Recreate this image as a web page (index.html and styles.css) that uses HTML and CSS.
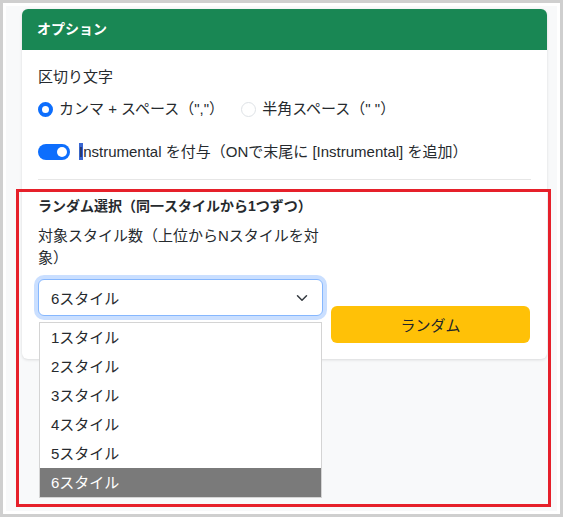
FILE: index.html
```html
<!DOCTYPE html>
<html lang="ja">
<head>
    <meta charset="UTF-8">
    <meta name="viewport" content="width=device-width, initial-scale=1.0">
    <title>オプション</title>
    <link rel="stylesheet" href="styles.css">
</head>
<body>
    <div class="frame">
        <div class="page">
            <div class="card">
                <div class="card-header">オプション</div>
                <div class="card-body">
                    <div class="field-label">区切り文字</div>
                    <div class="radio-row">
                        <label class="radio-item">
                            <span class="radio checked"></span> カンマ + スペース（","）
                        </label>
                        <label class="radio-item">
                            <span class="radio"></span> 半角スペース（" "）
                        </label>
                    </div>
                    <div class="switch-row">
                        <span class="switch"></span>
                        <span><span class="sel">I</span>nstrumental を付与（ONで末尾に [Instrumental] を追加）</span>
                    </div>
                    <hr class="divider">
                    <div class="section-title">ランダム選択（同一スタイルから1つずつ）</div>
                    <div class="random-row">
                        <div class="select-col">
                            <div class="field-label">対象スタイル数（上位からNスタイルを対象）</div>
                            <div class="select">
                                <span>6スタイル</span>
                                <svg width="12" height="12" viewBox="0 0 16 16"><path d="M2 5l6 6 6-6" fill="none" stroke="#343a40" stroke-width="2" stroke-linecap="round" stroke-linejoin="round"/></svg>
                            </div>
                            <ul class="dropdown">
                                <li>1スタイル</li>
                                <li>2スタイル</li>
                                <li>3スタイル</li>
                                <li>4スタイル</li>
                                <li>5スタイル</li>
                                <li class="active">6スタイル</li>
                            </ul>
                        </div>
                        <div class="button-col">
                            <button class="btn-random">ランダム</button>
                        </div>
                    </div>
                </div>
            </div>
        </div>
        <div class="highlight"></div>
    </div>
</body>
</html>
```

FILE: styles.css
```css
* {
    box-sizing: border-box;
}
html, body {
    margin: 0;
    height: 100%;
}
body {
    font-family: "Liberation Sans", "Noto Sans CJK JP", sans-serif;
    font-size: 15px;
    color: #262a2e;
    background-color: #fff;
}
.frame {
    position: relative;
    height: 517px;
    border: 3px solid #cfcfcf;
    padding: 3px;
    background-color: #fff;
}
.page {
    height: 100%;
    background-color: #f8f9fa;
    padding: 3px 10px 0 16px;
}
.card {
    background-color: #fff;
    border-radius: 6px;
    box-shadow: 0 1px 3px rgba(0,0,0,0.12);
}
.card-header {
    background-color: #198754;
    color: #fff;
    font-weight: 700;
    font-size: 14px;
    height: 41px;
    line-height: 41px;
    padding: 0 15px;
    border-radius: 6px 6px 0 0;
}
.card-body {
    padding: 16px;
}
.field-label {
    line-height: 22px;
}
.radio-row {
    display: flex;
    gap: 17px;
    margin-top: 10px;
    line-height: 22px;
}
.radio-item {
    display: flex;
    align-items: center;
    gap: 6px;
}
.radio {
    width: 15px;
    height: 15px;
    border-radius: 50%;
    border: 1px solid #dee2e6;
    background-color: #fff;
}
.radio.checked {
    border: 4px solid #0d6efd;
}
.switch-row {
    display: flex;
    align-items: center;
    gap: 9px;
    margin-top: 21px;
    line-height: 22px;
}
.switch {
    position: relative;
    width: 32px;
    height: 16px;
    border-radius: 8px;
    background-color: #0d6efd;
}
.switch::after {
    content: "";
    position: absolute;
    right: 3px;
    top: 3px;
    width: 10px;
    height: 10px;
    border-radius: 50%;
    background-color: #fff;
}
.sel {
    background-color: #3a66d1;
    color: #1a2a55;
}
.divider {
    border: none;
    border-top: 1px solid #e6e6e6;
    margin: 16px 0 15px;
}
.section-title {
    font-weight: 700;
    font-size: 14px;
    line-height: 22px;
}
.random-row {
    display: flex;
    gap: 8px;
    margin-top: 8px;
}
.select-col {
    position: relative;
    width: 285px;
}
.select {
    display: flex;
    align-items: center;
    justify-content: space-between;
    height: 37px;
    margin-top: 10px;
    padding: 0 14px 0 12px;
    border: 1px solid #86b7fe;
    border-radius: 6px;
    box-shadow: 0 0 0 4px rgba(13,110,253,0.22);
    background-color: #fff;
}
.dropdown {
    position: absolute;
    left: 1px;
    top: 97px;
    width: 283px;
    margin: 0;
    padding: 0;
    list-style: none;
    background-color: #fff;
    border: 1px solid #d4d4d4;
    z-index: 2;
}
.dropdown li {
    height: 29px;
    line-height: 29px;
    padding-left: 11px;
}
.dropdown li.active {
    background-color: #7a7a7a;
    color: #fff;
}
.button-col {
    flex: 1;
    padding-top: 81px;
    padding-right: 1px;
}
.btn-random {
    width: 100%;
    height: 37px;
    border: none;
    border-radius: 6px;
    background-color: #ffc107;
    color: #212529;
    font-family: inherit;
    font-size: 15px;
}
.highlight {
    position: absolute;
    left: 13px;
    top: 186px;
    width: 535px;
    height: 318px;
    border: 3px solid #e6202a;
    pointer-events: none;
}
```
